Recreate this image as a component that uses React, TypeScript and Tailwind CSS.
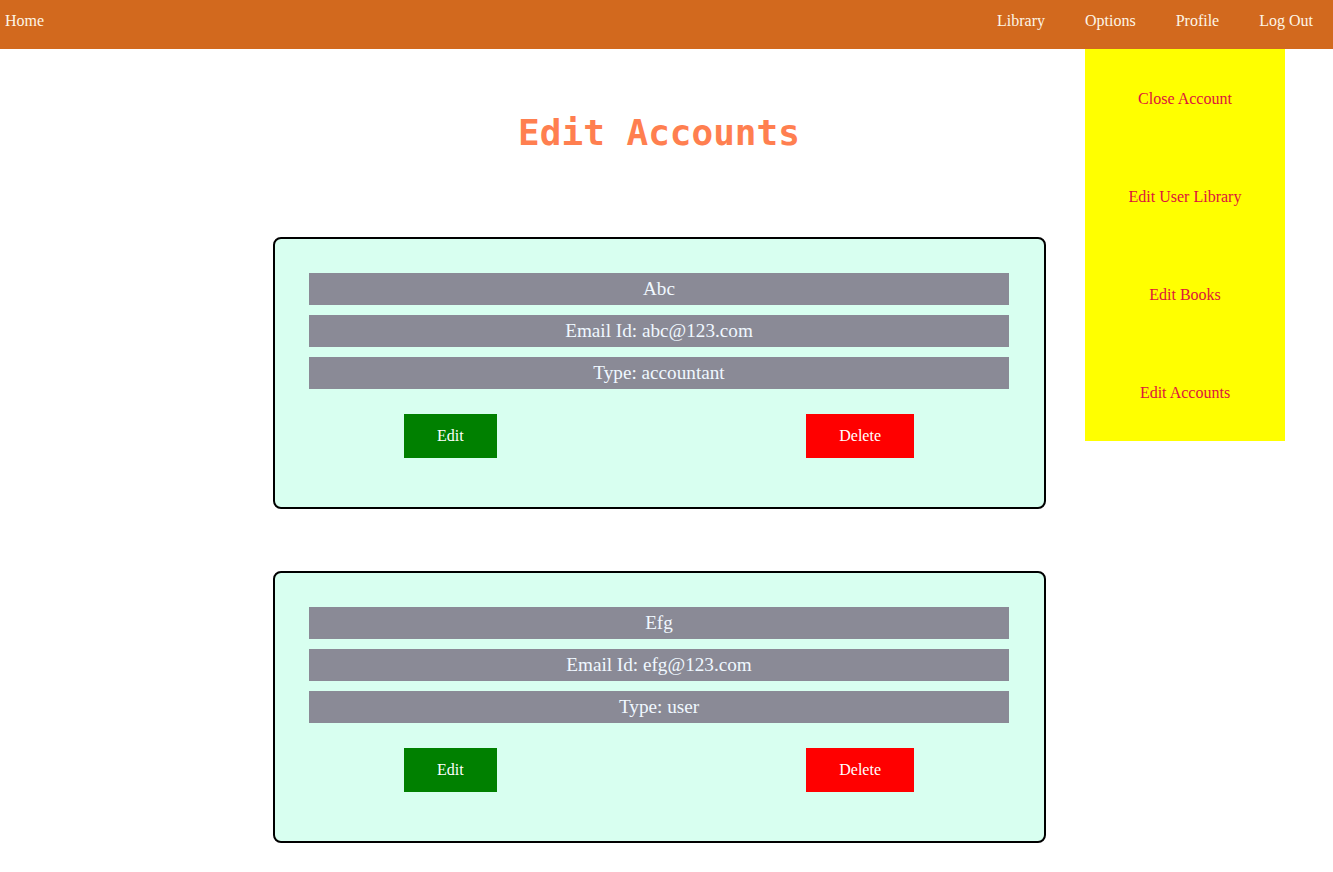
const accounts = [
  { name: "Abc", email: "abc@123.com", type: "accountant" },
  { name: "Efg", email: "efg@123.com", type: "user" },
];

const options = ["Close Account", "Edit User Library", "Edit Books", "Edit Accounts"];

function Navbar() {
  return (
    <nav className="relative h-[49px] bg-[#d2691e] flex items-start justify-between text-[16px] text-[#fdf5e6]">
      <a className="pl-[5px] pt-[9px]">Home</a>
      <div className="flex">
        <a className="px-5 pt-[9px]">Library</a>
        <a className="px-5 pt-[9px]">Options</a>
        <a className="px-5 pt-[9px]">Profile</a>
        <a className="px-5 pt-[9px]">Log Out</a>
      </div>
      <div className="absolute top-[49px] left-[1085px] w-[200px] bg-[#ffff00] z-10">
        {options.map((o) => (
          <div key={o} className="h-[98px] pt-[2px] flex items-center justify-center text-[#dc143c]">
            {o}
          </div>
        ))}
      </div>
    </nav>
  );
}

function AccountCard({ name, email, type }: { name: string; email: string; type: string }) {
  return (
    <div className="w-[773px] border-2 border-black rounded-lg bg-[#d8fff0] pt-[34px] pb-[49px] flex flex-col items-center">
      <div className="w-[700px] flex flex-col gap-[10px] text-[19.2px] text-[#f0f8ff]">
        <div className="h-8 bg-[#8a8a96] flex items-center justify-center">{name}</div>
        <div className="h-8 bg-[#8a8a96] flex items-center justify-center">Email Id: {email}</div>
        <div className="h-8 bg-[#8a8a96] flex items-center justify-center">Type: {type}</div>
      </div>
      <div className="w-[700px] mt-[25px] px-[95px] flex justify-between text-[16px] text-white">
        <button className="h-[44px] px-[33px] bg-[#008000]">Edit</button>
        <button className="h-[44px] px-[33px] bg-[#ff0000]">Delete</button>
      </div>
    </div>
  );
}

export default function App() {
  return (
    <div className="min-h-screen bg-white font-['Liberation_Serif',serif]">
      <Navbar />
      <main className="w-[1318px] flex flex-col items-center pb-8">
        <h1 className="mt-[63px] text-[36px] leading-[42px] font-bold text-[#ff7f50] font-['DejaVu_Sans_Mono',monospace]">
          Edit Accounts
        </h1>
        <div className="mt-[83px] flex flex-col gap-[62px]">
          {accounts.map((a) => (
            <AccountCard key={a.name} {...a} />
          ))}
        </div>
      </main>
    </div>
  );
}
